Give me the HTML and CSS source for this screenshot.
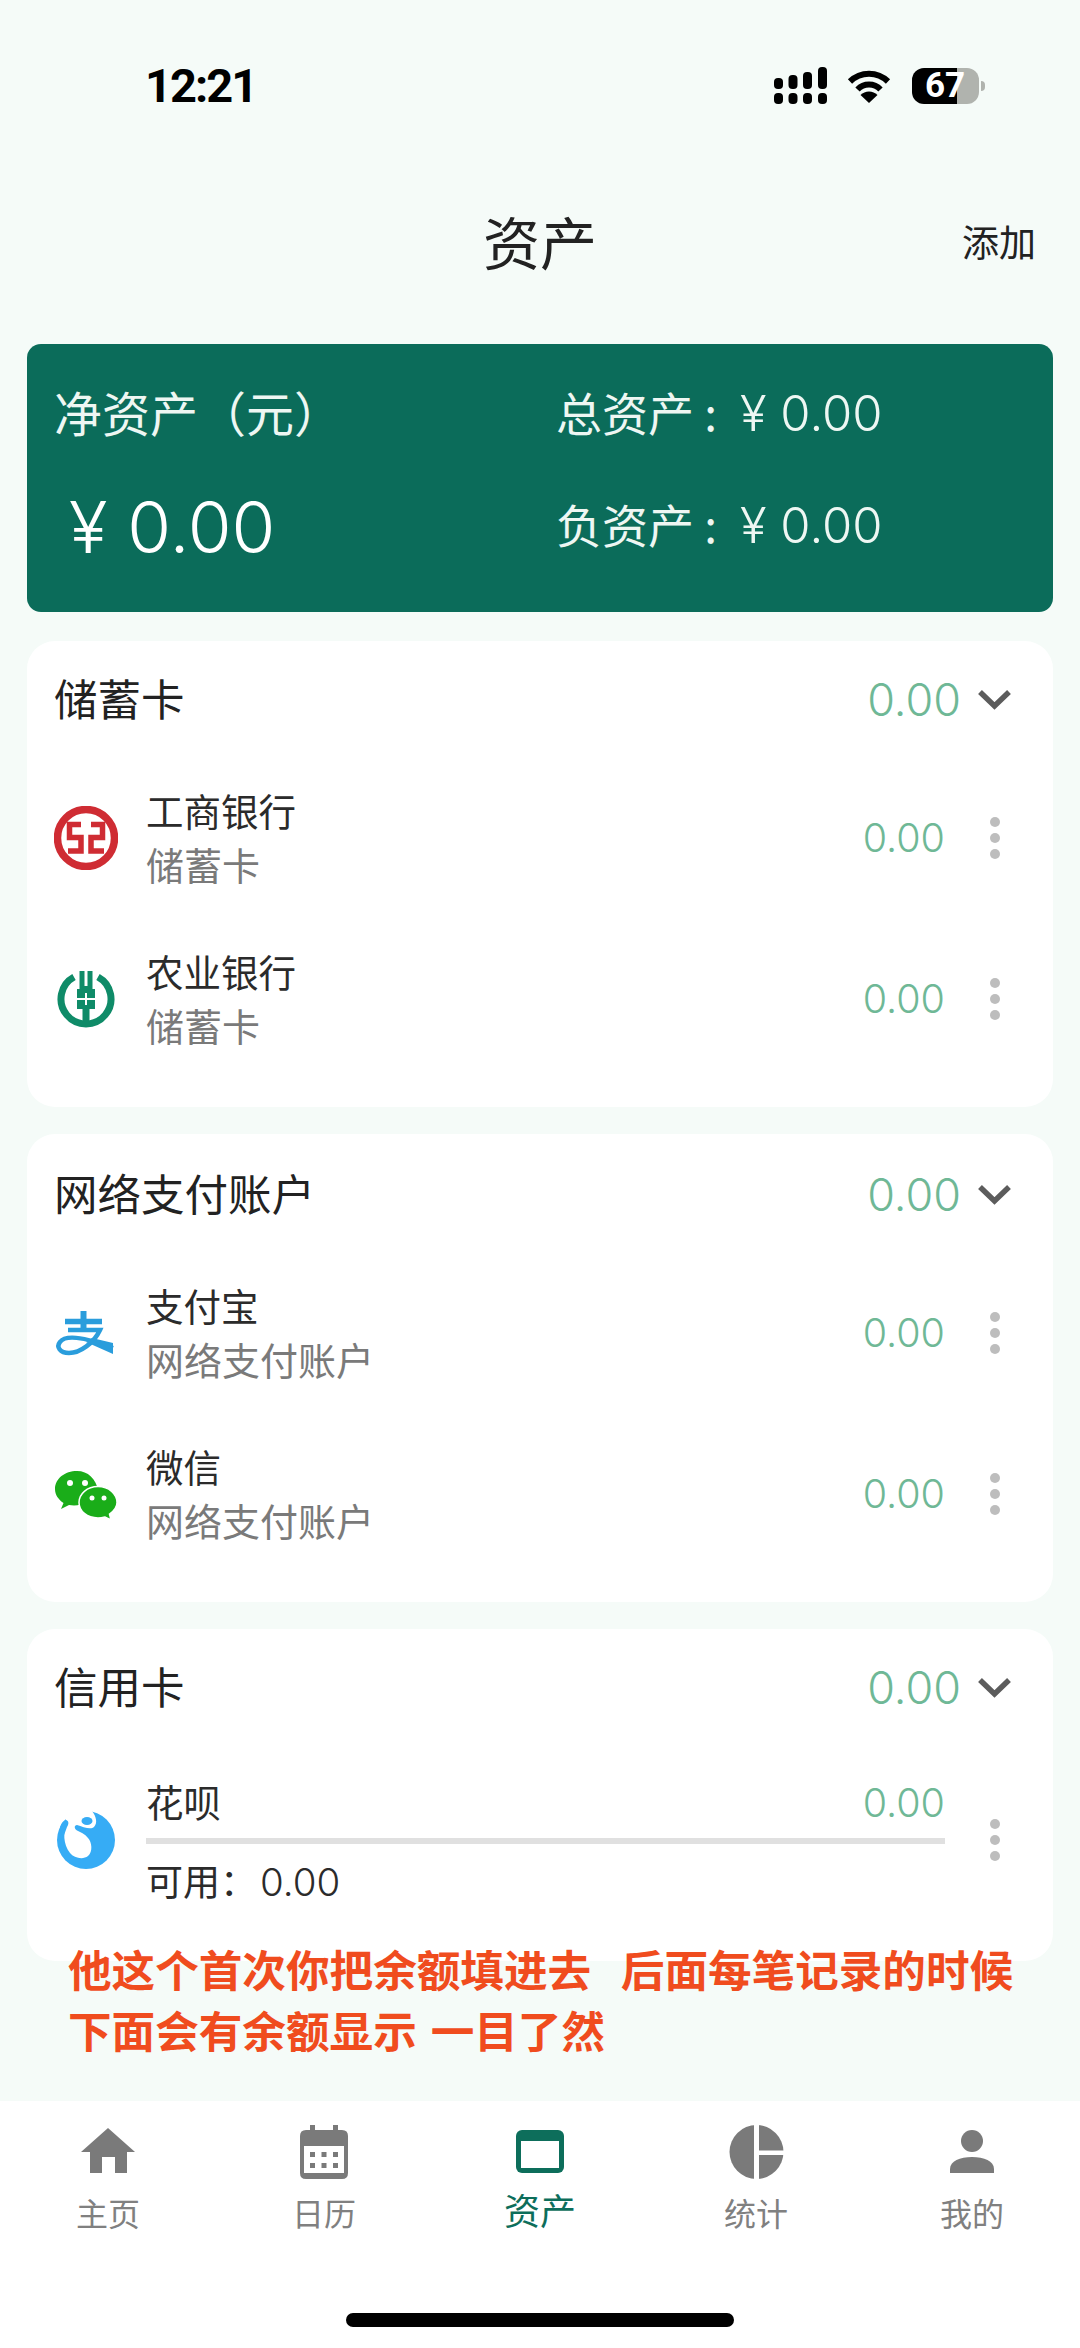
FILE: index.html
```html
<!doctype html>
<html lang="zh-CN">
  <head>
    <meta charset="UTF-8" />
    <meta name="viewport" content="width=device-width, initial-scale=1.0" />
    <title>资产</title>
    <link rel="stylesheet" href="styles.css">
  </head>
  <body>
    <div class="status-bar">
      <span class="time">12:21</span>
      <div class="status-icons">
        <svg class="signal" width="53" height="37" viewBox="0 0 53 37">
          <rect x="0" y="26" width="9" height="11" rx="4" />
          <rect x="14.500" y="26" width="9" height="11" rx="4" />
          <rect x="29" y="26" width="9" height="11" rx="4" />
          <rect x="44" y="26" width="9" height="11" rx="4" />
          <rect x="0" y="11" width="9" height="11" rx="4" />
          <rect x="14.500" y="8" width="9" height="14" rx="4" />
          <rect x="29" y="5" width="9" height="17" rx="4" />
          <rect x="44" y="0" width="9" height="22" rx="4" />
        </svg>
        <svg class="wifi" width="44" height="34" viewBox="0 0 44 34">
          <path d="M3 12.500A27 27 0 0 1 41 12.500" fill="none" stroke="#000" stroke-width="6" />
          <path d="M10.500 20.500A16 16 0 0 1 33.500 20.500" fill="none" stroke="#000" stroke-width="6" />
          <path d="M22 34L13.500 26A12 12 0 0 1 30.500 26Z" />
        </svg>
        <div class="battery"><span>67</span></div>
        <div class="battery-nub"></div>
      </div>
    </div>

    <div class="title-bar">
      <h1>资产</h1>
      <a class="add-link">添加</a>
    </div>

    <div class="summary">
      <div class="summary-label">净资产（元）</div>
      <div class="summary-side">总资产 :<span class="num">¥ 0.00</span></div>
      <div class="summary-net">¥ 0.00</div>
      <div class="summary-side">负资产 :<span class="num">¥ 0.00</span></div>
    </div>

    <section class="card">
      <div class="card-head">
        <span class="card-title">储蓄卡</span>
        <span class="card-total">0.00</span>
        <svg class="chevron" width="33" height="21" viewBox="0 0 33 21"><path d="M2 3L16.500 17L31 3" /></svg>
      </div>
      <div class="row">
        <svg class="logo" width="64" height="64" viewBox="0 0 64 64">
          <circle cx="32" cy="32" r="28.500" fill="none" stroke="#cf2c33" stroke-width="7.500" />
          <path d="M27 18.500H15.500V31.500H27V45H14M37 18.500H48.500V31.500H37V45H50" fill="none" stroke="#cf2c33" stroke-width="5.500" />
        </svg>
        <div class="row-text">
          <div class="row-name">工商银行</div>
          <div class="row-sub">储蓄卡</div>
        </div>
        <span class="row-amount">0.00</span>
        <div class="more"><i></i><i></i><i></i></div>
      </div>
      <div class="row">
        <svg class="logo" width="64" height="64" viewBox="0 0 64 64">
          <path d="M20 10A25 25 0 1 0 44 10" fill="none" stroke="#0f8b68" stroke-width="7" />
          <path d="M25.500 4H30.500V19H33.500V4H38.500V22H41V42H35.500V60H28.500V42H23V22H25.500Z" fill="#0f8b68" />
          <path d="M23 32H41M32 26V38" stroke="#fff" stroke-width="2" />
        </svg>
        <div class="row-text">
          <div class="row-name">农业银行</div>
          <div class="row-sub">储蓄卡</div>
        </div>
        <span class="row-amount">0.00</span>
        <div class="more"><i></i><i></i><i></i></div>
      </div>
    </section>

    <section class="card card-pay">
      <div class="card-head">
        <span class="card-title">网络支付账户</span>
        <span class="card-total">0.00</span>
        <svg class="chevron" width="33" height="21" viewBox="0 0 33 21"><path d="M2 3L16.500 17L31 3" /></svg>
      </div>
      <div class="row">
        <svg class="logo" width="64" height="64" viewBox="0 0 64 64">
          <path d="M29.500 10V27" fill="none" stroke="#2a9ddc" stroke-width="6" />
          <path d="M11 20.500H48" fill="none" stroke="#2a9ddc" stroke-width="5.500" />
          <path d="M14 29H46C40 42 26 52 15 52C6 52 2 46 6 41C11 34 28 35 59 47" fill="none" stroke="#2a9ddc" stroke-width="4.500" />
          <path d="M38 37L59 42V53L32 41Z" fill="#2a9ddc" />
        </svg>
        <div class="row-text">
          <div class="row-name">支付宝</div>
          <div class="row-sub">网络支付账户</div>
        </div>
        <span class="row-amount">0.00</span>
        <div class="more"><i></i><i></i><i></i></div>
      </div>
      <div class="row">
        <svg class="logo" width="64" height="64" viewBox="0 0 64 64">
          <g transform="translate(0 2)">
            <path d="M23 7C11 7 1 14.500 1 25C1 31 4.500 35.500 9.500 39L7 45L15 41C25 43 38 39 44 26C42 15 34 7 23 7Z" fill="#1aad19" />
            <path d="M44 22.500C33 22.500 25 30 25 38.500C25 47 33 54 44 54C47 54 49 53.500 51 53L57 56L55.500 50C60 47 63 43 63 38.500C63 30 55 22.500 44 22.500Z" fill="#1aad19" stroke="#fff" stroke-width="1.500" />
            <circle cx="16" cy="19" r="3" fill="#fff" />
            <circle cx="31" cy="19" r="3" fill="#fff" />
            <circle cx="38" cy="34" r="2.500" fill="#fff" />
            <circle cx="50" cy="34" r="2.500" fill="#fff" />
          </g>
        </svg>
        <div class="row-text">
          <div class="row-name">微信</div>
          <div class="row-sub">网络支付账户</div>
        </div>
        <span class="row-amount">0.00</span>
        <div class="more"><i></i><i></i><i></i></div>
      </div>
    </section>

    <section class="card card-credit">
      <div class="card-head">
        <span class="card-title">信用卡</span>
        <span class="card-total">0.00</span>
        <svg class="chevron" width="33" height="21" viewBox="0 0 33 21"><path d="M2 3L16.500 17L31 3" /></svg>
      </div>
      <div class="row row-credit">
        <svg class="logo" width="64" height="64" viewBox="0 0 64 64">
          <circle cx="32" cy="32" r="29" fill="#36acf5" />
          <path d="M13 14C9 24 9 36 16 45C20 50 29 52 34 48C39 44 38 34 34 30C31 26 26 24 23 22.500C20 21 20 17 23 17C29 19 37 22 40 19C44 15 42 8 38 3L30 0L8 3Z" fill="#fff" />
          <path d="M6 19C8 14 10 12 12 12C15 13 15 16 13 19L9 30Z" fill="#36acf5" />
          <ellipse cx="33" cy="13" rx="5.500" ry="4" fill="#36acf5" />
        </svg>
        <div class="credit-body">
          <div class="credit-top">
            <span class="row-name credit-name">花呗</span>
            <span class="row-amount">0.00</span>
          </div>
          <div class="credit-line"></div>
          <div class="credit-left">可用：<span class="credit-num">0.00</span></div>
        </div>
        <div class="more"><i></i><i></i><i></i></div>
      </div>
    </section>

    <div class="note">
      <div class="note-line">他这个首次你把余额填进去   后面每笔记录的时候</div>
      <div class="note-line note-line-wide">下面会有余额显示 一目了然</div>
    </div>

    <nav class="tabbar">
      <div class="tabs">
        <div class="tab">
          <svg width="55" height="54" viewBox="0 0 55 54">
            <path d="M27 3L54 27H46V48H34V32H21V48H9V27H0Z" />
          </svg>
          <span>主页</span>
        </div>
        <div class="tab">
          <svg width="48" height="54" viewBox="0 0 48 54">
            <path d="M10 0H15V5H33V0H38V5H42Q48 5 48 11V48Q48 54 42 54H6Q0 54 0 48V11Q0 5 6 5H10Z" />
            <rect x="4" y="21" width="40" height="27" fill="#fff" />
            <path d="M10 27h5v5h-5zM21.500 27h5v5h-5zM33 27h5v5h-5zM10 38h5v5h-5zM21.500 38h5v5h-5zM33 38h5v5h-5z" />
          </svg>
          <span>日历</span>
        </div>
        <div class="tab tab-active">
          <svg width="48" height="54" viewBox="0 0 48 54">
            <rect x="0" y="5" width="48" height="43" rx="6" />
            <rect x="5" y="16" width="38" height="27" fill="#fff" />
          </svg>
          <span>资产</span>
        </div>
        <div class="tab">
          <svg width="55" height="54" viewBox="0 0 55 54">
            <circle cx="27.500" cy="27" r="27" />
            <rect x="25" y="0" width="5" height="54" fill="#fff" />
            <rect x="27" y="25.500" width="28" height="4.500" fill="#fff" />
          </svg>
          <span>统计</span>
        </div>
        <div class="tab">
          <svg width="44" height="54" viewBox="0 0 44 54">
            <ellipse cx="22" cy="16" rx="11" ry="11" />
            <path d="M0 48V44C0 36 10 32 22 32C34 32 44 36 44 44V48Z" />
          </svg>
          <span>我的</span>
        </div>
      </div>
      <div class="home-bar"></div>
    </nav>
  </body>
</html>
```

FILE: styles.css
```css
body {
  margin: 0;
  padding: 0;
  width: 1080px;
  height: 2348px;
  overflow: hidden;
  display: flex;
  flex-direction: column;
  background-color: #f5fbf8;
  color: #222;
  font-family: "Noto Sans CJK SC", "Noto Sans", sans-serif;
}

.status-bar {
  display: flex;
  justify-content: space-between;
  align-items: center;
  height: 37px;
  padding: 67px 95px 0 145px;
}

.time {
  font-family: Roboto, sans-serif;
  font-weight: 700;
  font-size: 47px;
  letter-spacing: -2px;
  color: #000;
}

.status-icons {
  display: flex;
  align-items: center;
}

.wifi {
  margin-left: 20px;
}

.battery {
  width: 67px;
  height: 36px;
  margin-left: 21px;
  padding-left: 13px;
  box-sizing: border-box;
  border-radius: 12px;
  background: linear-gradient(to right, #000 67%, #b0b3ae 67%);
  color: #fff;
  font-family: Roboto, sans-serif;
  font-weight: 700;
  font-size: 35px;
  line-height: 36px;
}

.battery-nub {
  width: 4px;
  height: 10px;
  margin-left: 2px;
  border-radius: 0 4px 4px 0;
  background-color: #b0b3ae;
}

.title-bar {
  position: relative;
  height: 240px;
  padding-top: 101px;
  box-sizing: border-box;
  display: flex;
  justify-content: center;
  align-items: flex-start;
}

.title-bar h1 {
  margin: 0;
  font-size: 57px;
  font-weight: 400;
  line-height: 70px;
}

.add-link {
  position: absolute;
  right: 44px;
  top: 113px;
  font-size: 37px;
  line-height: 48px;
}

.summary {
  display: grid;
  grid-template-columns: 502px 1fr;
  grid-template-rows: 112px 112px;
  align-items: center;
  height: 268px;
  margin: 0 27px 29px;
  padding: 15px 0 0 27px;
  box-sizing: border-box;
  border-radius: 14px;
  background-color: #0b6c5a;
  color: #eef7f3;
}

.summary-label {
  padding-bottom: 8px;
  font-size: 48px;
}

.summary-side {
  padding-bottom: 8px;
  font-size: 46px;
}

.num {
  margin-left: 23px;
  font-family: Inter, sans-serif;
  font-weight: 300;
  font-size: 49px;
}

.summary-net {
  padding-left: 15px;
  font-family: Inter, sans-serif;
  font-weight: 300;
  font-size: 71px;
  color: #fff;
}

.card {
  margin: 0 27px 27px;
  padding: 0 42px 28px 27px;
  border-radius: 28px;
  background-color: #fff;
}

.card-pay {
  padding-top: 2px;
}

.card-credit {
  margin-bottom: 0;
  padding-bottom: 0;
  height: 332px;
}

.card-head {
  display: flex;
  align-items: center;
  height: 116px;
}

.card-title {
  flex: 1;
  padding-bottom: 4px;
  font-size: 43.500px;
}

.card-total {
  font-family: Inter, sans-serif;
  font-weight: 300;
  font-size: 45px;
  color: #6fb896;
  margin-right: 17px;
}

.chevron path {
  fill: none;
  stroke: #5c5c5c;
  stroke-width: 5.500px;
}

.row {
  display: flex;
  align-items: center;
  height: 161px;
}

.row-credit {
  height: 190px;
}

.logo {
  flex: none;
  margin-right: 28px;
}

.row-text {
  flex: 1;
  padding-bottom: 2px;
}

.row-name {
  font-size: 37.500px;
  line-height: 54px;
  color: #2b2b2b;
}

.row-sub {
  font-size: 38px;
  line-height: 54px;
  color: #7a7a7a;
}

.row-amount {
  font-family: Inter, sans-serif;
  font-weight: 300;
  font-size: 39.500px;
  color: #6fb896;
}

.more {
  flex: none;
  display: flex;
  flex-direction: column;
  align-items: center;
  gap: 6px;
  width: 33px;
  margin-left: 33px;
}

.more i {
  width: 10px;
  height: 10px;
  border-radius: 50%;
  background-color: #bdbdbd;
}

.credit-body {
  flex: 1;
  padding-top: 7px;
}

.credit-top {
  display: flex;
  justify-content: space-between;
  align-items: center;
  height: 54px;
}

.credit-name {
  padding-bottom: 4px;
}

.credit-line {
  height: 6px;
  margin: 8px 0 6px;
  background-color: #e0e0e0;
}

.credit-left {
  font-size: 37px;
  line-height: 60px;
  color: #2b2b2b;
}

.credit-num {
  margin-left: 3px;
  font-family: Inter, sans-serif;
  font-weight: 300;
  font-size: 38.500px;
}

.note {
  position: relative;
  margin: -23px 0 0 68px;
  font-size: 43.600px;
  font-weight: 700;
  line-height: 61px;
  color: #f04c1e;
}

.note-line {
  white-space: pre;
}

.note-line-wide {
  word-spacing: 4px;
}

.tabbar {
  margin-top: auto;
  height: 247px;
  padding-top: 24px;
  box-sizing: border-box;
  background-color: #fff;
}

.tabs {
  display: grid;
  grid-template-columns: repeat(5, 1fr);
}

.tab {
  display: flex;
  flex-direction: column;
  align-items: center;
  fill: #7a7a7a;
  color: #808080;
  font-size: 32px;
  line-height: 44px;
}

.tab svg {
  display: block;
  margin-bottom: 11px;
}

.tab-active {
  fill: #0d6e5b;
  color: #0d6e5b;
  font-size: 36px;
}

.tab-active svg {
  margin-bottom: 8px;
}

.home-bar {
  width: 388px;
  height: 14px;
  margin: 79px auto 0;
  border-radius: 7px;
  background-color: #000;
}
```
